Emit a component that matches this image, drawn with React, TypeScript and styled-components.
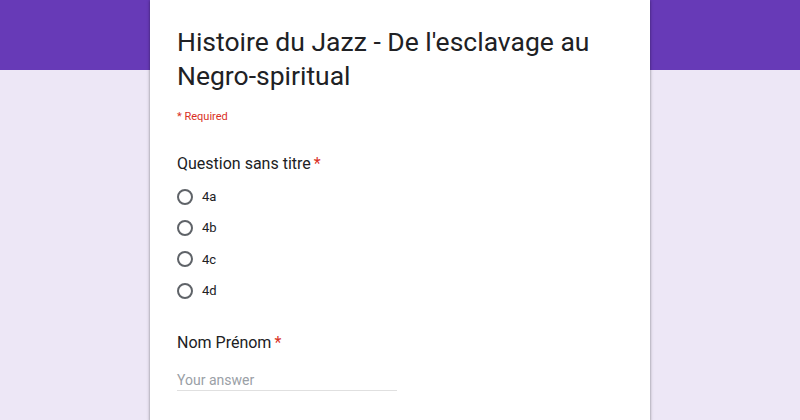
import React from "react";
import styled, { createGlobalStyle } from "styled-components";

const Global = createGlobalStyle`
  html, body { margin: 0; padding: 0; }
  body { font-family: Roboto, "Liberation Sans", Arial, sans-serif; color: #202124; }
`;

const Page = styled.div`
  min-height: 420px;
  background: linear-gradient(to bottom, #673ab7 0, #673ab7 70px, #ede7f6 70px);
  overflow: hidden;
`;

const Card = styled.div`
  width: 500px;
  margin: 0 auto;
  min-height: 420px;
  background: #fff;
  box-shadow: 0 1px 2px rgba(0, 0, 0, 0.3), 0 1px 3px 1px rgba(0, 0, 0, 0.15);
  padding: 25px 27px 0 27px;
  box-sizing: border-box;
`;

const Title = styled.h1`
  margin: 0;
  font-size: 26.5px;
  line-height: 34px;
  font-weight: 400;
  color: #202124;
`;

const Required = styled.div`
  margin-top: 16px;
  font-size: 11px;
  line-height: 16px;
  color: #d93025;
`;

const Question = styled.section<{ $gap: number }>`
  margin-top: ${(p) => p.$gap}px;
`;

const QTitle = styled.div`
  font-size: 16px;
  line-height: 24px;
  color: #202124;
`;

const Star = styled.span`
  color: #d93025;
  margin-left: 3px;
`;

const Options = styled.div`
  margin-top: 5px;
  display: flex;
  flex-direction: column;
`;

const Option = styled.label`
  display: flex;
  align-items: center;
  height: 31.3px;
  gap: 9px;
`;

const Radio = styled.span`
  width: 16px;
  height: 16px;
  box-sizing: border-box;
  border: 2px solid #5f6368;
  border-radius: 50%;
  flex: none;
`;

const OptLabel = styled.span`
  font-size: 13px;
  color: #202124;
`;

const Answer = styled.div`
  margin-top: 15px;
  width: 220px;
  font-size: 14px;
  line-height: 20px;
  color: #9aa0a6;
  border-bottom: 1px solid #e0e0e0;
  padding-bottom: 0;
`;

export default function App() {
  return (
    <>
      <Global />
      <Page>
        <Card>
          <Title>Histoire du Jazz - De l'esclavage au Negro-spiritual</Title>
          <Required>* Required</Required>
          <Question $gap={27}>
            <QTitle>
              Question sans titre<Star>*</Star>
            </QTitle>
            <Options>
              {["4a", "4b", "4c", "4d"].map((o) => (
                <Option key={o}>
                  <Radio />
                  <OptLabel>{o}</OptLabel>
                </Option>
              ))}
            </Options>
          </Question>
          <Question $gap={25}>
            <QTitle>
              Nom Prénom<Star>*</Star>
            </QTitle>
            <Answer>Your answer</Answer>
          </Question>
        </Card>
      </Page>
    </>
  );
}
